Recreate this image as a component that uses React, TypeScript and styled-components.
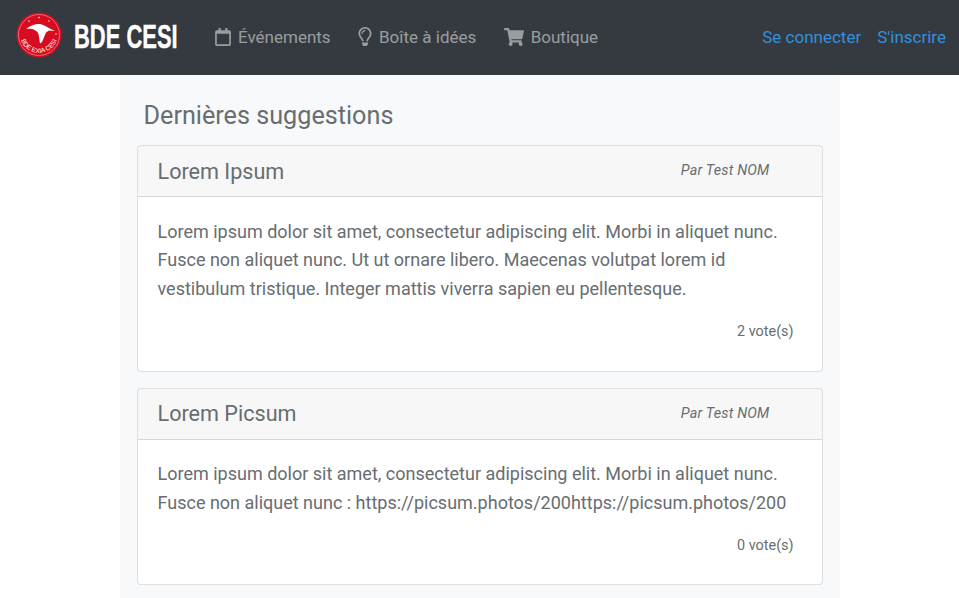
import styled, { createGlobalStyle } from 'styled-components';
import { FaRegCalendar, FaRegLightbulb, FaShoppingCart } from 'react-icons/fa';

const GlobalStyle = createGlobalStyle`
  html, body {
    margin: 0;
    padding: 0;
    background: #fff;
    font-family: Roboto, "Liberation Sans", sans-serif;
    color: #676d71;
  }
`;

const Navbar = styled.nav`
  height: 75px;
  background: #343a40;
  display: flex;
  align-items: center;
  padding: 0 13px 6px 16px;
  box-sizing: border-box;
`;

const Brand = styled.a`
  display: flex;
  align-items: center;
  gap: 12px;
`;

const BrandName = styled.span`
  font-family: "Liberation Sans", sans-serif;
  font-weight: 700;
  font-size: 33px;
  line-height: 34px;
  color: #fff;
  width: 104px;
  margin-top: 4px;
  white-space: nowrap;
  -webkit-text-stroke: 0.4px #fff;
  transform: scaleX(0.665);
  transform-origin: left center;
`;

const NavLinks = styled.div`
  display: flex;
  align-items: center;
  gap: 27.4px;
  flex: 1;
  margin: 4px 0 0 37px;
`;

const NavLink = styled.a`
  display: flex;
  align-items: center;
  gap: 7px;
  font-size: 17px;
  color: rgba(255, 255, 255, 0.5);
`;

const CalendarIcon = styled(FaRegCalendar)`
  width: 16px;
  height: 18px;
`;

const BulbIcon = styled(FaRegLightbulb)`
  width: 14px;
  height: 19px;
`;

const CartIcon = styled(FaShoppingCart)`
  width: 20px;
  height: 18px;
`;

const AuthLinks = styled.div`
  display: flex;
  gap: 16px;
  margin-top: 4px;
`;

const AuthLink = styled.a`
  font-size: 17px;
  color: #3490dc;
`;

const Page = styled.main`
  width: 720px;
  min-height: calc(100vh - 75px);
  margin: 0 auto;
  background: #f8f9fa;
  padding: 25px 17px 0;
  box-sizing: border-box;
`;

const Title = styled.h4`
  margin: 0 0 13.4px 7px;
  font-size: 25.2px;
  font-weight: 400;
  line-height: 32px;
  color: #676d71;
`;

const Card = styled.article`
  background: #fff;
  border: 1px solid rgba(0, 0, 0, 0.125);
  border-radius: 4px;
  margin-bottom: 16px;
  &:last-child { margin-bottom: 0; }
`;

const CardHeader = styled.header`
  height: 50px;
  background: rgba(0, 0, 0, 0.03);
  border-bottom: 1px solid rgba(0, 0, 0, 0.125);
  display: flex;
  align-items: center;
  justify-content: space-between;
  padding: 0 52px 0 20px;
`;

const CardTitle = styled.h5`
  margin: 0;
  font-size: 21.6px;
  font-weight: 400;
  color: #676d71;
`;

const Author = styled.em`
  font-size: 14.4px;
  letter-spacing: 0.2px;
  margin-bottom: 1px;
  color: #676d71;
`;

const CardBody = styled.div`
  padding: 20.2px 28px 27.8px 20px;
`;

const Text = styled.p`
  margin: 0;
  font-size: 18px;
  line-height: 28.8px;
  color: #676d71;
`;

const Votes = styled.div`
  text-align: right;
  font-size: 14.4px;
  margin-top: 16px;
  line-height: 23px;
  color: #676d71;
`;

const Logo = () => (
  <svg width="46" height="46" viewBox="0 0 46 46">
    <circle cx="23" cy="23" r="22.5" fill="#d80c20" />
    <circle cx="23" cy="23" r="20.5" fill="none" stroke="#f2a5ad" strokeWidth="0.6" />
    <path d="M10 17 C15 13 20 11.5 24 12 C29 13 33 16.5 39 19 L33 18.5 L30 20.5 L26 30 L24 31.5 L22.5 22 C21 18 16 16 10 17Z" fill="#fff" />
    <circle cx="23" cy="5.5" r="0.8" fill="#fff" />
    <circle cx="13" cy="9" r="0.7" fill="#fff" />
    <circle cx="33" cy="9" r="0.7" fill="#fff" />
    <circle cx="40" cy="22" r="0.7" fill="#fff" />
    <path id="logo-arc" d="M5 28 A19 19 0 0 0 41 28" fill="none" />
    <text fontFamily="'Liberation Sans', sans-serif" fontSize="6.5" fill="#fff">
      <textPath href="#logo-arc" startOffset="50%" textAnchor="middle">BDE EXIA CESI</textPath>
    </text>
  </svg>
);

const suggestions = [
  {
    title: 'Lorem Ipsum',
    text: 'Lorem ipsum dolor sit amet, consectetur adipiscing elit. Morbi in aliquet nunc. Fusce non aliquet nunc. Ut ut ornare libero. Maecenas volutpat lorem id vestibulum tristique. Integer mattis viverra sapien eu pellentesque.',
    votes: 2,
  },
  {
    title: 'Lorem Picsum',
    text: 'Lorem ipsum dolor sit amet, consectetur adipiscing elit. Morbi in aliquet nunc. Fusce non aliquet nunc : https://picsum.photos/200https://picsum.photos/200',
    votes: 0,
  },
];

const App = () => (
  <>
    <GlobalStyle />
    <Navbar>
      <Brand>
        <Logo />
        <BrandName>BDE CESI</BrandName>
      </Brand>
      <NavLinks>
        <NavLink><CalendarIcon /> Événements</NavLink>
        <NavLink><BulbIcon /> Boîte à idées</NavLink>
        <NavLink><CartIcon /> Boutique</NavLink>
      </NavLinks>
      <AuthLinks>
        <AuthLink>Se connecter</AuthLink>
        <AuthLink>S'inscrire</AuthLink>
      </AuthLinks>
    </Navbar>
    <Page>
      <Title>Dernières suggestions</Title>
      {suggestions.map((s) => (
        <Card key={s.title}>
          <CardHeader>
            <CardTitle>{s.title}</CardTitle>
            <Author>Par Test NOM</Author>
          </CardHeader>
          <CardBody>
            <Text>{s.text}</Text>
            <Votes>{s.votes} vote(s)</Votes>
          </CardBody>
        </Card>
      ))}
    </Page>
  </>
);

export default App;
